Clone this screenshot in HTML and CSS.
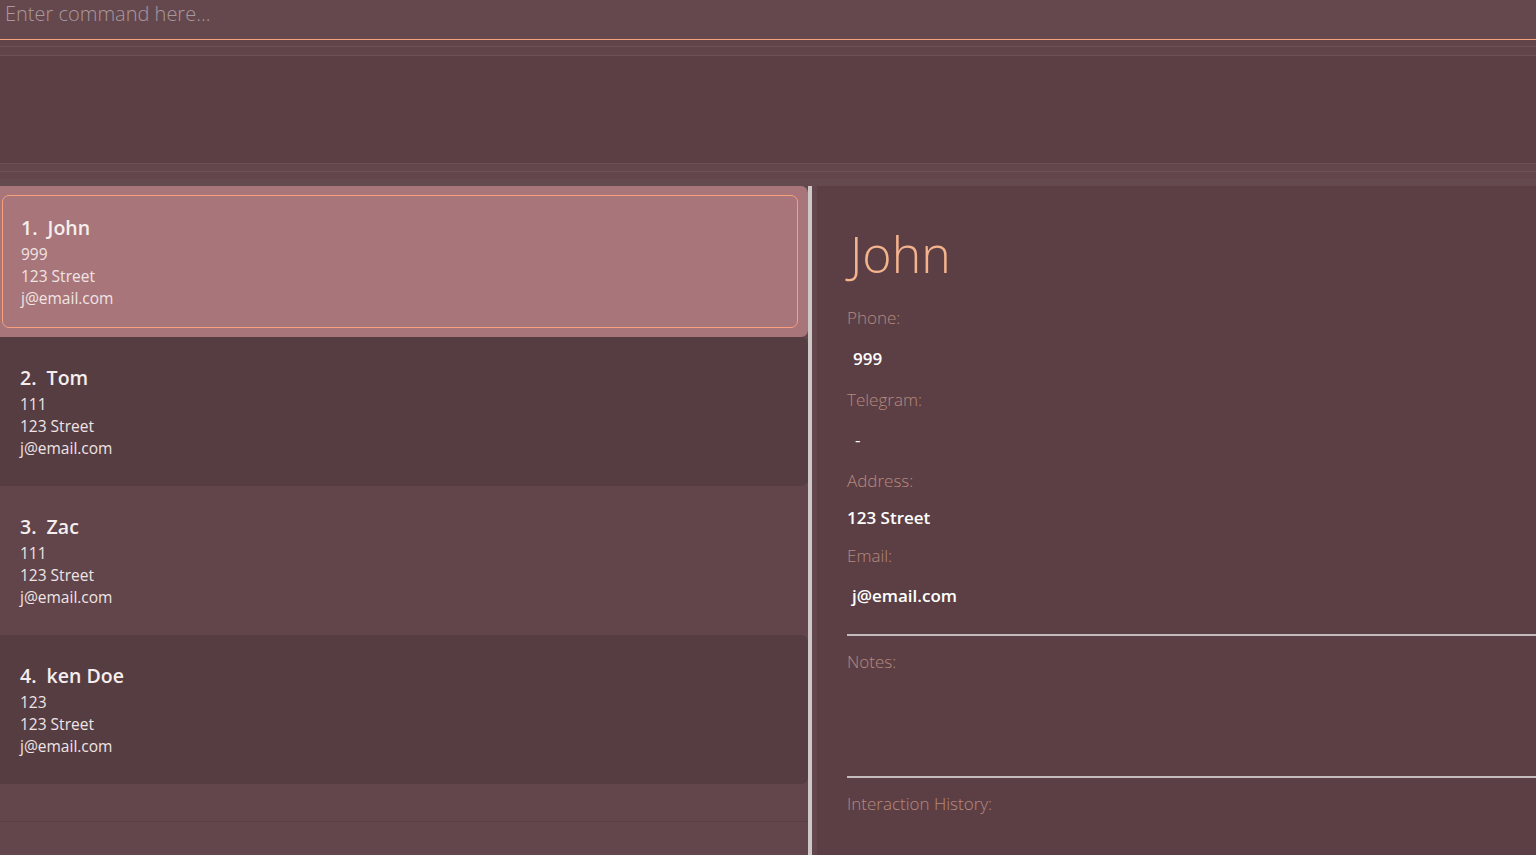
FILE: index.html
```html
<!DOCTYPE html>
<html>
<head>
<meta charset="utf-8">
<link rel="stylesheet" href="styles.css">
</head>
<body>
<div class="app">
  <div class="command">
    <input class="command-input" type="text" placeholder="Enter command here...">
  </div>
  <div class="band band-top"><div class="rule"></div><div class="rule"></div></div>
  <div class="result"></div>
  <div class="band band-bottom"><div class="rule"></div><div class="rule"></div></div>
  <div class="main">
    <div class="list">
      <div class="card selected">
        <div class="card-inner">
          <div class="card-name">1.&nbsp;&nbsp;John</div>
          <div class="card-line">999</div>
          <div class="card-line">123 Street</div>
          <div class="card-line">j@email.com</div>
        </div>
      </div>
      <div class="card dark">
        <div class="card-inner">
          <div class="card-name">2.&nbsp;&nbsp;Tom</div>
          <div class="card-line">111</div>
          <div class="card-line">123 Street</div>
          <div class="card-line">j@email.com</div>
        </div>
      </div>
      <div class="card light">
        <div class="card-inner">
          <div class="card-name">3.&nbsp;&nbsp;Zac</div>
          <div class="card-line">111</div>
          <div class="card-line">123 Street</div>
          <div class="card-line">j@email.com</div>
        </div>
      </div>
      <div class="card dark">
        <div class="card-inner">
          <div class="card-name">4.&nbsp;&nbsp;ken Doe</div>
          <div class="card-line">123</div>
          <div class="card-line">123 Street</div>
          <div class="card-line">j@email.com</div>
        </div>
      </div>
      <div class="empty-row"></div>
      <div class="empty-row"></div>
    </div>
    <div class="splitter"></div>
    <div class="gap"></div>
    <div class="detail">
      <div class="detail-name">John</div>
      <div class="label l-phone">Phone:</div>
      <div class="value v-phone">999</div>
      <div class="label l-tele">Telegram:</div>
      <div class="value v-tele">-</div>
      <div class="label l-addr">Address:</div>
      <div class="value v-addr">123 Street</div>
      <div class="label l-email">Email:</div>
      <div class="value v-email">j@email.com</div>
      <div class="divider d-first"></div>
      <div class="label l-notes">Notes:</div>
      <div class="notes-space"></div>
      <div class="divider"></div>
      <div class="label l-hist">Interaction History:</div>
    </div>
  </div>
</div>
</body>
</html>
```
FILE: styles.css
```css
* { box-sizing: border-box; }
html, body {
  margin: 0;
  padding: 0;
  height: 855px;
  overflow: hidden;
  background: #5c3f45;
  font-family: "Open Sans", "Noto Sans", sans-serif;
}
.app {
  display: flex;
  flex-direction: column;
  height: 855px;
}
.command {
  height: 40px;
  background: #65484d;
  border-bottom: 1px solid #f7a37f;
}
.command-input {
  width: 100%;
  height: 39px;
  border: none;
  outline: none;
  background: transparent;
  padding: 0 0 0 5px;
  font-family: "Open Sans", sans-serif;
  font-weight: 300;
  font-size: 20px;
  color: #ffffff;
  margin-top: -6px;
}
.command-input::placeholder {
  color: #a8989c;
}
.band {
  display: flex;
  flex-direction: column;
}
.band-top {
  height: 16px;
  background: #604449;
  padding-top: 6px;
  gap: 8px;
}
.band-top .rule { height: 1px; background: #6c5156; }
.result {
  height: 107px;
  background: #5c3f45;
}
.band-bottom {
  height: 23px;
  background: #62464b;
  gap: 7px;
}
.band-bottom .rule { height: 1px; background: #6b5055; }
.band-bottom::after {
  content: "";
  flex: 1;
  background: #644a4e;
}
.main {
  flex: 1;
  display: flex;
  min-height: 0;
}
.list {
  width: 808px;
  background: #62464b;
  display: flex;
  flex-direction: column;
}
.card {
  border-radius: 0 7px 7px 0;
  flex: none;
}
.card.selected {
  height: 151px;
  background: #a8767a;
  padding: 9px 10px 9px 2px;
}
.card.selected .card-inner {
  height: 133px;
  border: 1.5px solid #f8a07b;
  border-radius: 7px;
  padding: 19px 0 0 18px;
}
.card.dark {
  height: 149px;
  background: #563d42;
}
.card.light {
  height: 149px;
  background: #61454a;
}
.card-inner {
  padding: 28px 0 0 20px;
  color: #f3e9ea;
}
.card-name {
  font-weight: 600;
  font-size: 19.5px;
  line-height: 26px;
  margin-bottom: 2px;
  color: #f6eeee;
}
.card-line {
  font-size: 15.5px;
  line-height: 22px;
  color: #f0e4e5;
}
.empty-row {
  height: 38px;
  background: #62464b;
  border-bottom: 1px solid #5a3f44;
}
.empty-row + .empty-row {
  border-bottom: none;
  flex: 1;
}
.splitter {
  width: 4px;
  background: #cfc8c8;
}
.gap {
  width: 5px;
  background: #62464b;
}
.detail {
  flex: 1;
  background: #5c3f45;
  border-radius: 8px 0 0 0;
  padding: 34px 0 0 30px;
  display: flex;
  flex-direction: column;
}
.detail-name {
  font-weight: 300;
  font-size: 50px;
  line-height: 68px;
  color: #f4b48e;
  margin-left: 3px;
}
.label {
  font-weight: 300;
  font-size: 17px;
  line-height: 22px;
  color: #b7897c;
}
.value {
  font-weight: 600;
  font-size: 17px;
  line-height: 24px;
  color: #ffffff;
}
.l-phone { margin-top: 19px; }
.v-phone { margin-top: 18px; padding-left: 6px; }
.l-tele { margin-top: 18px; }
.v-tele { margin-top: 17px; padding-left: 8px; font-weight: 400; }
.l-addr { margin-top: 18px; }
.v-addr { margin-top: 14px; }
.l-email { margin-top: 15px; }
.v-email { margin-top: 17px; padding-left: 5px; }
.divider {
  height: 2px;
  background: #c4bcbc;
  flex: none;
}
.d-first { margin-top: 26px; }
.l-notes { margin-top: 15px; }
.notes-space { height: 103px; }
.l-hist { margin-top: 15px; }
```
